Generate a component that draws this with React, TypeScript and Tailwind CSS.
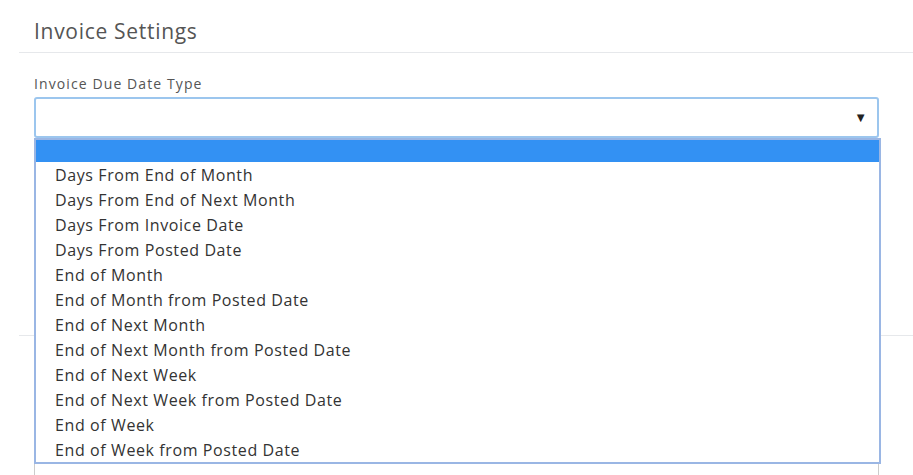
const dueDateTypes = [
  "Days From End of Month",
  "Days From End of Next Month",
  "Days From Invoice Date",
  "Days From Posted Date",
  "End of Month",
  "End of Month from Posted Date",
  "End of Next Month",
  "End of Next Month from Posted Date",
  "End of Next Week",
  "End of Next Week from Posted Date",
  "End of Week",
  "End of Week from Posted Date",
];

export default function App() {
  return (
    <div className="h-[475px] overflow-hidden bg-white pl-[19px] font-['Open_Sans',sans-serif] text-[#333]">
      {/* invoice settings */}
      <div className="border-b border-[#e6e8eb] pb-[7px] pl-[15px] pt-[17px]">
        <h2 className="text-[21px] leading-[28px] tracking-[0.7px] text-[#555]">Invoice Settings</h2>
      </div>
      <div className="pl-[15px] pr-[34px] pt-[22px]">
        <label className="block text-[14px] font-medium leading-[18px] tracking-[1.1px] text-[#555]">
          Invoice Due Date Type
        </label>
        <div className="relative mt-[4px]">
          <div className="flex h-[41px] items-center justify-end rounded-[3px] border-2 border-[#9cc6ee] bg-white pr-[10px]">
            <span className="text-[13px] text-[#222]">▼</span>
          </div>
          <ul className="absolute left-0 top-[41px] z-10 w-[847px] border-2 border-[#9ab6e4] bg-white">
            <li className="h-[22px] bg-[#3391f3]" />
            {dueDateTypes.map((t) => (
              <li key={t} className="h-[25px] pl-[19px] pt-[1px] text-[16px] leading-[25px] tracking-[0.6px] text-[#333]">
                {t}
              </li>
            ))}
          </ul>
        </div>
      </div>

      {/* next section, under the open list */}
      <div className="mt-[197px] border-b border-[#e6e8eb]" />
      <div className="pl-[15px] pr-[34px] pt-[118px]">
        <div className="h-[60px] rounded-[3px] border border-[#ccc]" />
      </div>
    </div>
  );
}
